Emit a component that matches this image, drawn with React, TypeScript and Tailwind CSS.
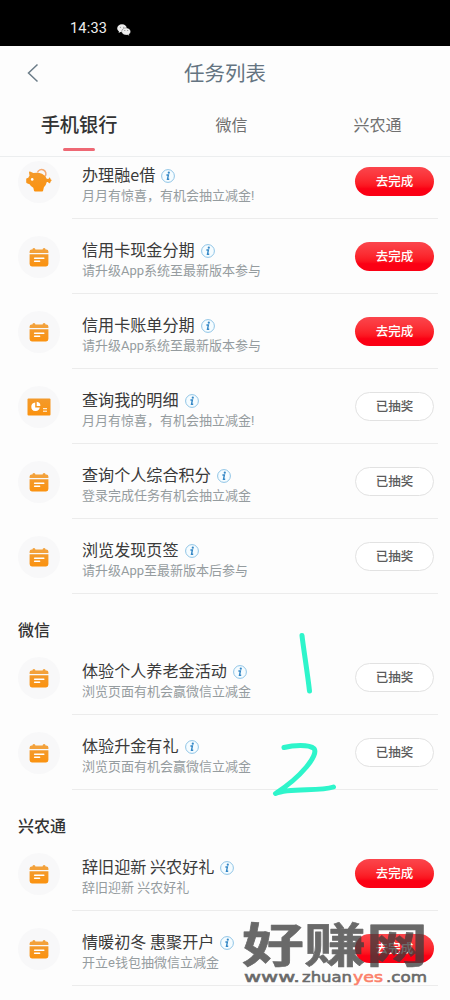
import React from 'react';

type IconKind = 'calendar' | 'piggy' | 'report';

interface Task {
  title: string;
  desc: string;
  icon: IconKind;
  done: boolean;
}

interface Section {
  name?: string;
  tasks: Task[];
}

const sections: Section[] = [
  {
    tasks: [
      { title: '办理融e借', desc: '月月有惊喜，有机会抽立减金!', icon: 'piggy', done: false },
      { title: '信用卡现金分期', desc: '请升级App系统至最新版本参与', icon: 'calendar', done: false },
      { title: '信用卡账单分期', desc: '请升级App系统至最新版本参与', icon: 'calendar', done: false },
      { title: '查询我的明细', desc: '月月有惊喜，有机会抽立减金!', icon: 'report', done: true },
      { title: '查询个人综合积分', desc: '登录完成任务有机会抽立减金', icon: 'calendar', done: true },
      { title: '浏览发现页签', desc: '请升级App至最新版本后参与', icon: 'calendar', done: true },
    ],
  },
  {
    name: '微信',
    tasks: [
      { title: '体验个人养老金活动', desc: '浏览页面有机会赢微信立减金', icon: 'calendar', done: true },
      { title: '体验升金有礼', desc: '浏览页面有机会赢微信立减金', icon: 'calendar', done: true },
    ],
  },
  {
    name: '兴农通',
    tasks: [
      { title: '辞旧迎新 兴农好礼', desc: '辞旧迎新 兴农好礼', icon: 'calendar', done: false },
      { title: '情暖初冬 惠聚开户', desc: '开立e钱包抽微信立减金', icon: 'calendar', done: false },
    ],
  },
];

const OrangeGradient: React.FC = () => (
  <defs>
    <linearGradient id="orange" x1="0" y1="0" x2="0" y2="1">
      <stop offset="0" stopColor="#f39a2c" />
      <stop offset="1" stopColor="#fb920f" />
    </linearGradient>
  </defs>
);

const TaskIcon: React.FC<{ kind: IconKind }> = ({ kind }) => {
  if (kind === 'piggy') {
    return (
      <svg width="28" height="26" viewBox="0 0 28 26" className="-mt-1">
        <OrangeGradient />
        <path d="M12.500 5.500a4.300 4.300 0 1 1 7.600 3.800" fill="none" stroke="#f5aa72" strokeWidth="1.500" />
        <path
          d="M4 5.200Q4 4.300 5 4.600L8.400 6Q13 5 17 6.700Q20.800 8.500 21.700 11.800L23.500 12Q24.300 9.800 25.200 11L25.500 12.300Q27.600 13.300 25.800 14.300L25 16.300Q23.700 16.500 23 15L21.800 15.100Q21.200 18.200 18.900 20.200L18.100 23.700Q18 24.500 17.200 24.500H10Q9.200 24.500 9 23.800L8.300 20.800Q5.800 19.600 4.600 17.300L1.900 16.200Q1.200 15.900 1.200 15.200V12.200Q1.200 11.500 1.900 11.300L3.300 10.700Q3.700 9.600 4.500 8.700Z"
          fill="url(#orange)"
        />
        <circle cx="7.200" cy="12.400" r="1.300" fill="#fff" />
      </svg>
    );
  }
  if (kind === 'report') {
    return (
      <svg width="24" height="18" viewBox="0 0 24 18">
        <OrangeGradient />
        <rect x="0.500" y="0.500" width="23" height="17" rx="1" fill="url(#orange)" />
        <path d="M8.200 4.400a4.300 4.300 0 1 0 4.600 5.200H8.200z" fill="#fff" />
        <path d="M9.700 3.800a4.200 4.200 0 0 1 3.700 4.200H9.700z" fill="#fff" />
        <path d="M16 10.700h4M16 13.200h4" stroke="#fff" strokeWidth="1" />
      </svg>
    );
  }
  return (
    <svg width="20" height="20" viewBox="0 0 20 20">
      <OrangeGradient />
      <path d="M.6 6V4.500a2 2 0 0 1 2-2h.8a1.500 1.500 0 0 1 3 0h7.200a1.500 1.500 0 0 1 3 0h.8a2 2 0 0 1 2 2V6z" fill="#f3a13a" />
      <path d="M.6 7.200h18.800v9.900a2.300 2.300 0 0 1-2.300 2.300H2.900A2.300 2.300 0 0 1 .6 17.100z" fill="url(#orange)" />
      <path d="M5.600 11.200h9.200M5.600 14.300h5" stroke="#fff" strokeWidth="1.500" strokeLinecap="round" />
    </svg>
  );
};

const InfoIcon: React.FC = () => (
  <svg width="14" height="14" viewBox="0 0 14 14" className="shrink-0">
    <circle cx="7" cy="7" r="6.400" fill="#f5fcff" stroke="#8fc4e6" strokeWidth="1" />
    <circle cx="7.800" cy="3.700" r="1.100" fill="#3487c6" />
    <path d="M5.400 6h2L6.500 10.300h1.700" fill="none" stroke="#3487c6" strokeWidth="1.400" />
  </svg>
);

const TaskRow: React.FC<{ task: Task }> = ({ task }) => (
  <div className="flex h-[75px] pl-[18px] pr-3">
    <div className="mt-[17px] flex h-[42px] w-[42px] shrink-0 items-center justify-center rounded-full bg-[#f8f8f9]">
      <TaskIcon kind={task.icon} />
    </div>
    <div className="ml-3 flex flex-1 border-b border-[#ececec] pl-2.5">
      <div className="flex-1 pt-[18px]">
        <div className="flex h-6 items-center gap-1.5">
          <span className="whitespace-nowrap text-[16.1px] leading-6 text-[#3a3a3a]">{task.title}</span>
          <span className="pt-[3px]"><InfoIcon /></span>
        </div>
        <p className="whitespace-nowrap font-[Roboto,'Noto_Sans_CJK_SC',sans-serif] text-[13px] leading-[19px] text-[#959c9f]">{task.desc}</p>
      </div>
      {task.done ? (
        <button className="mr-1 mt-[23px] h-[29px] w-[79px] rounded-full border-[1.5px] border-[#e2e2e2] bg-white text-[12.5px] font-medium text-[#5c5c5c]">
          已抽奖
        </button>
      ) : (
        <button className="mr-1 mt-[23px] h-[29px] w-[79px] rounded-full bg-linear-to-b from-[#fb454c] to-[#fb0014] to-75% text-[12.5px] font-medium text-white">
          去完成
        </button>
      )}
    </div>
  </div>
);

const StatusBar: React.FC = () => (
  <div className="flex h-[46px] items-center gap-[11px] bg-black pl-[70px] pt-[13px] text-white">
    <span className="w-9 font-[Roboto] text-[14.5px] leading-none tracking-[0.2px] text-[#eee]">14:33</span>
    <svg width="14" height="12" viewBox="0 0 14 12">
      <path d="M5 .3C2.300.3.200 2 .200 4.300c0 1.300.7 2.400 1.800 3.200l-.4 1.500 1.800-.9 1.600.2c2.700 0 4.800-1.700 4.800-4S7.700.3 5 .3z" fill="#eee" />
      <path d="M9.200 3.900c-2.500 0-4.500 1.500-4.500 3.600s2 3.600 4.500 3.600l1.500-.2 1.600.9-.4-1.400c1-.7 1.700-1.700 1.700-2.900 0-2.100-1.900-3.600-4.400-3.600z" fill="#eee" stroke="#000" strokeWidth=".3" />
      <path d="M3.400 2.900v.7M6.700 2.900v.7M7.800 6v.7M10.700 6v.7" stroke="#444" strokeWidth=".8" />
    </svg>
  </div>
);

// Handwritten marks over the 微信 section
const Marks: React.FC = () => (
  <svg className="pointer-events-none absolute left-[268px] top-[628px]" width="72" height="172" viewBox="0 0 72 172">
    <g fill="none" stroke="#2ef5cb" strokeWidth="5" strokeLinecap="round" strokeLinejoin="round">
      <path d="M34 7.500C35.500 21 39.500 45 41.500 63" />
      <path d="M16 119.500C25 117 41 116 46 120.500C51 127 33 149 7.500 165.500C21 159 51 164 65.500 159" />
    </g>
  </svg>
);

const Watermark: React.FC = () => (
  <svg className="pointer-events-none absolute left-[240px] top-[905px]" width="200" height="90" viewBox="0 0 200 90">
    <g fill="#3c3c3c" opacity="0.760">
      <text
        transform="translate(2 57) scale(1 0.760)"
        fontFamily="'Noto Sans CJK SC', sans-serif"
        fontSize="62"
        fontWeight="700"
        stroke="#3c3c3c"
        strokeWidth="0.800"
        strokeLinejoin="round"
      >
        好赚网
      </text>
      <g fontFamily="'DejaVu Sans', sans-serif" fontSize="14.500" stroke="#3c3c3c" strokeWidth="0.600">
        <text x="4" y="76.500" textLength="56" lengthAdjust="spacingAndGlyphs">www.</text>
        <text x="62" y="76.500" textLength="50" lengthAdjust="spacingAndGlyphs">zhuan</text>
        <text x="113" y="76.500" textLength="30" lengthAdjust="spacingAndGlyphs" fill="#fb5a3c" stroke="#fb5a3c">yes</text>
        <text x="146" y="76.500" textLength="41" lengthAdjust="spacingAndGlyphs">.com</text>
      </g>
    </g>
  </svg>
);

const App: React.FC = () => {
  return (
    <div className="relative h-[1000px] w-[450px] overflow-hidden bg-[#fdfdfd] font-['Noto_Sans_CJK_SC',sans-serif]">
      <StatusBar />
      <header className="relative z-10 h-[111px] border-b border-[#eceeef] bg-[#fdfdfd]">
        <div className="grid h-[54px] grid-cols-3 items-center">
          <svg width="12" height="20" viewBox="0 0 12 20" className="ml-[27px]">
            <path d="M10.500 1.500L1.500 10l9 8.500" fill="none" stroke="#6b7c88" strokeWidth="1.500" />
          </svg>
          <h1 className="-mt-0.5 text-center text-[20.5px] leading-6 text-[#647481]">任务列表</h1>
        </div>
        <nav className="flex h-14 pl-1">
          <div className="flex w-[150px] flex-col items-center pt-2.5">
            <span className="text-[19.2px] font-medium leading-7 text-[#333]">手机银行</span>
            <span className="mt-[10px] h-[3px] w-8 rounded-full bg-[#ee6874]" />
          </div>
          <div className="w-[155px] pt-2.5 text-center text-[16px] leading-7 text-[#707070]">微信</div>
          <div className="w-[137px] pt-2.5 text-center text-[16px] leading-7 text-[#707070]">兴农通</div>
        </nav>
      </header>

      <main className="-mt-[13px]">
        {sections.map((section, i) => (
          <section key={i}>
            {section.name && (
              <h2 className="h-[46px] pl-[18px] pt-[23px] text-[16px] font-medium leading-6 text-[#333]">{section.name}</h2>
            )}
            {section.tasks.map((task) => (
              <TaskRow key={task.title} task={task} />
            ))}
          </section>
        ))}
      </main>

      <Marks />
      <Watermark />
    </div>
  );
};

export default App;
